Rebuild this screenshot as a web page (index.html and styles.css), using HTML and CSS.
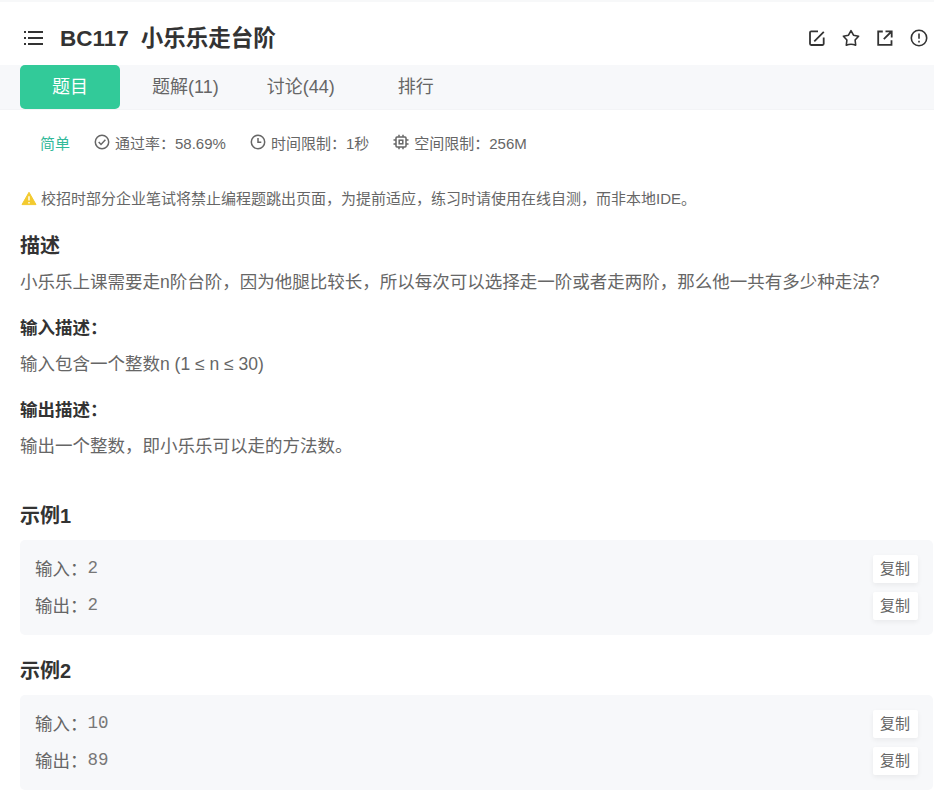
FILE: index.html
```html
<!DOCTYPE html>
<html lang="zh-CN">
<head>
    <meta charset="UTF-8">
    <meta name="viewport" content="width=device-width, initial-scale=1.0">
    <title>BC117 小乐乐走台阶</title>
    <link rel="stylesheet" href="styles.css">
</head>
<body>
    <header class="header">
        <svg class="menu-icon" width="20" height="16" viewBox="0 0 20 16" fill="none" stroke="#333" stroke-width="2">
            <path d="M1 2h2M1 8h2M1 14h2M5 2h15M5 8h15M5 14h15"/>
        </svg>
        <h1 class="title"><span class="title-no">BC117</span>小乐乐走台阶</h1>
        <div class="actions">
            <svg width="18" height="18" viewBox="0 0 18 18" fill="none" stroke="#333" stroke-width="1.8">
                <path d="M10 2.3H3.2Q2 2.3 2 3.5v11.3Q2 16 3.2 16h11.3q1.2 0 1.2-1.2V8.5M6.3 12.3L15.8 2.8"/>
            </svg>
            <svg width="18" height="18" viewBox="0 0 18 18" fill="none" stroke="#333" stroke-width="1.6" stroke-linejoin="round">
                <path d="M9 1.7l2.5 4.5 5.1 1-3.5 3.8.6 5.2Q9 14.2 4.3 16.2l.6-5.2-3.5-3.8 5.1-1z"/>
            </svg>
            <svg width="18" height="18" viewBox="0 0 18 18" fill="none" stroke="#333" stroke-width="1.8">
                <path d="M6.8 2.5H2.2v13.3h13.3v-4.5M9.5 2.3h6.2v6.2M15.5 2.5L7.8 10.2"/>
            </svg>
            <svg width="18" height="18" viewBox="0 0 18 18" fill="none" stroke="#333" stroke-width="1.6">
                <circle cx="9" cy="9" r="7.7"/>
                <path d="M9 4.6v5.2M9 11.7v1.7"/>
            </svg>
        </div>
    </header>

    <nav class="tabs">
        <a class="tab active">题目</a>
        <a class="tab">题解(11)</a>
        <a class="tab">讨论(44)</a>
        <a class="tab">排行</a>
    </nav>

    <main class="content">
        <div class="meta">
            <span class="level">简单</span>
            <span class="meta-item">
                <svg width="16" height="16" viewBox="0 0 16 16" fill="none" stroke="#666" stroke-width="1.5">
                    <circle cx="8" cy="8" r="6.7"/>
                    <path d="M4.7 8l2.3 2.4 4.4-4.6"/>
                </svg>
                通过率：58.69%
            </span>
            <span class="meta-item">
                <svg width="16" height="16" viewBox="0 0 16 16" fill="none" stroke="#666" stroke-width="1.5">
                    <circle cx="8" cy="8" r="6.7"/>
                    <path d="M8 4v4.2h3.3"/>
                </svg>
                时间限制：1秒
            </span>
            <span class="meta-item">
                <svg width="16" height="16" viewBox="0 0 16 16" fill="none" stroke="#666" stroke-width="1.5">
                    <rect x="3" y="3" width="10" height="10" rx="1"/>
                    <rect x="6.2" y="6.2" width="3.6" height="3.6"/>
                    <path d="M6 .8v2M10 .8v2M6 13v2.2M10 13v2.2M.5 6H3M.5 10H3M13 6h2.5M13 10h2.5"/>
                </svg>
                空间限制：256M
            </span>
        </div>

        <div class="notice">
            <svg width="16" height="15" viewBox="0 0 16 15">
                <path d="M8 1.3L15 13.6H1z" fill="#f3ca2f" stroke="#f3ca2f" stroke-linejoin="round"/>
                <path d="M8 5.3v4.3M8 11v1.4" stroke="#fff" stroke-width="1.4"/>
            </svg>
            校招时部分企业笔试将禁止编程题跳出页面，为提前适应，练习时请使用在线自测，而非本地IDE。
        </div>

        <h2 class="section-title">描述</h2>
        <p class="text">小乐乐上课需要走n阶台阶，因为他腿比较长，所以每次可以选择走一阶或者走两阶，那么他一共有多少种走法?</p>

        <h3 class="sub-title">输入描述：</h3>
        <p class="text">输入包含一个整数n (1 ≤ n ≤ 30)</p>

        <h3 class="sub-title">输出描述：</h3>
        <p class="text">输出一个整数，即小乐乐可以走的方法数。</p>

        <section class="example">
            <h2 class="section-title">示例1</h2>
            <div class="sample">
                <div class="sample-row">输入：<pre>2</pre><button class="copy">复制</button></div>
                <div class="sample-row">输出：<pre>2</pre><button class="copy">复制</button></div>
            </div>
        </section>

        <section class="example">
            <h2 class="section-title">示例2</h2>
            <div class="sample">
                <div class="sample-row">输入：<pre>10</pre><button class="copy">复制</button></div>
                <div class="sample-row">输出：<pre>89</pre><button class="copy">复制</button></div>
            </div>
        </section>
    </main>
</body>
</html>
```

FILE: styles.css
```css
* {
    box-sizing: border-box;
}

body {
    margin: 0;
    background: #fff;
    color: #666;
    font-family: "Liberation Sans", "Noto Sans CJK SC", sans-serif;
    font-size: 17.5px;
}

h1, h2, h3, p, pre {
    margin: 0;
}

svg {
    flex: none;
}

.header {
    display: flex;
    align-items: center;
    height: 65px;
    padding: 9px 6px 0 23px;
    border-top: 2px solid #f7f8f9;
    color: #333;
}

.title {
    margin-left: 17px;
    padding-top: 2px;
    font-size: 22.5px;
    line-height: 34px;
}

.title-no {
    margin-right: 12px;
}

.actions {
    display: flex;
    gap: 16px;
    margin-left: auto;
}

.actions svg {
    margin-top: -1px;
}

.tabs {
    display: flex;
    height: 45px;
    padding-left: 20px;
    background: #f7f8fa;
    border-bottom: 1px solid #f3f4f6;
}

.tab {
    height: 44px;
    margin-right: 16px;
    padding: 0 16px;
    font-size: 18px;
    line-height: 44px;
    white-space: nowrap;
}

.tab:last-child {
    margin-left: 15px;
}

.tab.active {
    width: 100px;
    background: #32ca99;
    border-radius: 5px;
    color: #fff;
    text-align: center;
}

.content {
    padding: 0 1px 0 20px;
}

.meta {
    display: flex;
    align-items: center;
    gap: 24px;
    height: 64px;
    padding-left: 20px;
    font-size: 15px;
}

.level {
    color: #32b99a;
}

.meta-item {
    display: flex;
    align-items: center;
    gap: 5px;
}

.meta-item svg {
    margin-top: -1px;
}

.notice {
    display: flex;
    align-items: center;
    gap: 4px;
    height: 47px;
    padding-left: 1px;
    font-size: 15px;
}

.notice svg {
    margin-top: 1px;
}

.section-title {
    height: 47px;
    padding-top: 2px;
    color: #333;
    font-size: 20px;
    line-height: 46px;
}

.text {
    line-height: 28px;
    white-space: nowrap;
}

.sub-title {
    margin: 15px 0 4px;
    color: #333;
    font-size: 17.5px;
    line-height: 35px;
}

.example {
    padding-top: 13px;
}

.text + .example {
    padding-top: 33px;
}

.example .section-title {
    padding-top: 0;
}

.sample {
    height: 95px;
    padding: 9px 15px;
    background: #f7f8fa;
    border-radius: 5px;
}

.sample-row {
    display: flex;
    align-items: center;
    height: 37px;
}

.sample-row pre {
    color: #777;
    font-family: "Liberation Mono", monospace;
    font-size: 17.5px;
}

.copy {
    width: 45px;
    height: 28px;
    margin: 2px 0 0 auto;
    padding: 0 1px 0 0;
    background: #fff;
    border: none;
    border-radius: 2px;
    box-shadow: 0 2px 5px rgba(0, 0, 0, 0.06);
    color: #666;
    font-family: inherit;
    font-size: 15px;
    line-height: 28px;
}
```
